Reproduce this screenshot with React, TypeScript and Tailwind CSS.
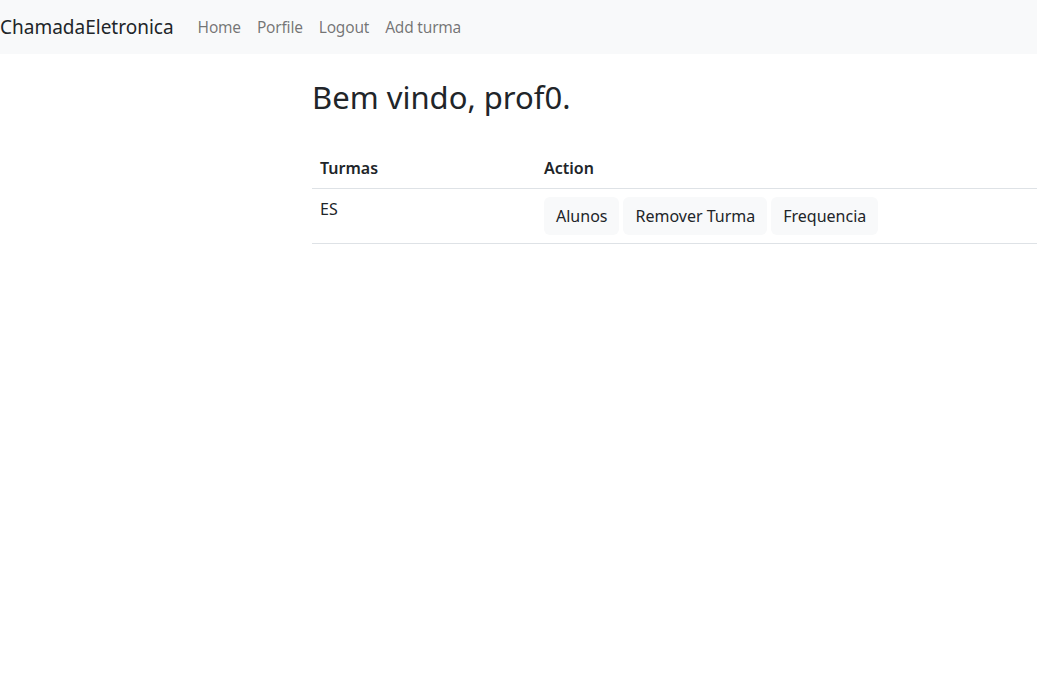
import React from "react";

export default function App() {
  const font = { fontFamily: '"Noto Sans", "Open Sans", sans-serif' };
  return (
    <div className="min-h-[700px] bg-white text-[#212529]" style={font}>
      <nav className="flex h-[54px] items-center bg-[#f8f9fa]">
        <span className="mr-4 text-[19px] leading-[30px] text-[#212529]">ChamadaEletronica</span>
        <div className="flex">
          {["Home", "Porfile", "Logout", "Add turma"].map((l) => (
            <span key={l} className="px-2 text-[15.5px] leading-6 tracking-[-0.2px] text-[rgba(0,0,0,0.55)]">
              {l}
            </span>
          ))}
        </div>
      </nav>
      <div className="flex">
        <div className="w-[312px] shrink-0" />
        <div className="flex-1">
          <h1 className="mt-[25px] mb-[32px] text-[31px] font-normal leading-[1.2]">Bem vindo, prof0.</h1>
          <table className="w-full border-collapse text-[16px]">
            <thead>
              <tr className="border-b border-[#dee2e6]">
                <th className="w-[224px] p-2 text-left font-semibold">Turmas</th>
                <th className="p-2 text-left font-semibold">Action</th>
              </tr>
            </thead>
            <tbody>
              <tr className="border-b border-[#dee2e6]">
                <td className="p-2 align-top">ES</td>
                <td className="p-2">
                  <div className="flex gap-1">
                    {["Alunos", "Remover Turma", "Frequencia"].map((b) => (
                      <span key={b} className="rounded-md bg-[#f8f9fa] px-3 py-[7px] leading-6">
                        {b}
                      </span>
                    ))}
                  </div>
                </td>
              </tr>
            </tbody>
          </table>
        </div>
      </div>
    </div>
  );
}
